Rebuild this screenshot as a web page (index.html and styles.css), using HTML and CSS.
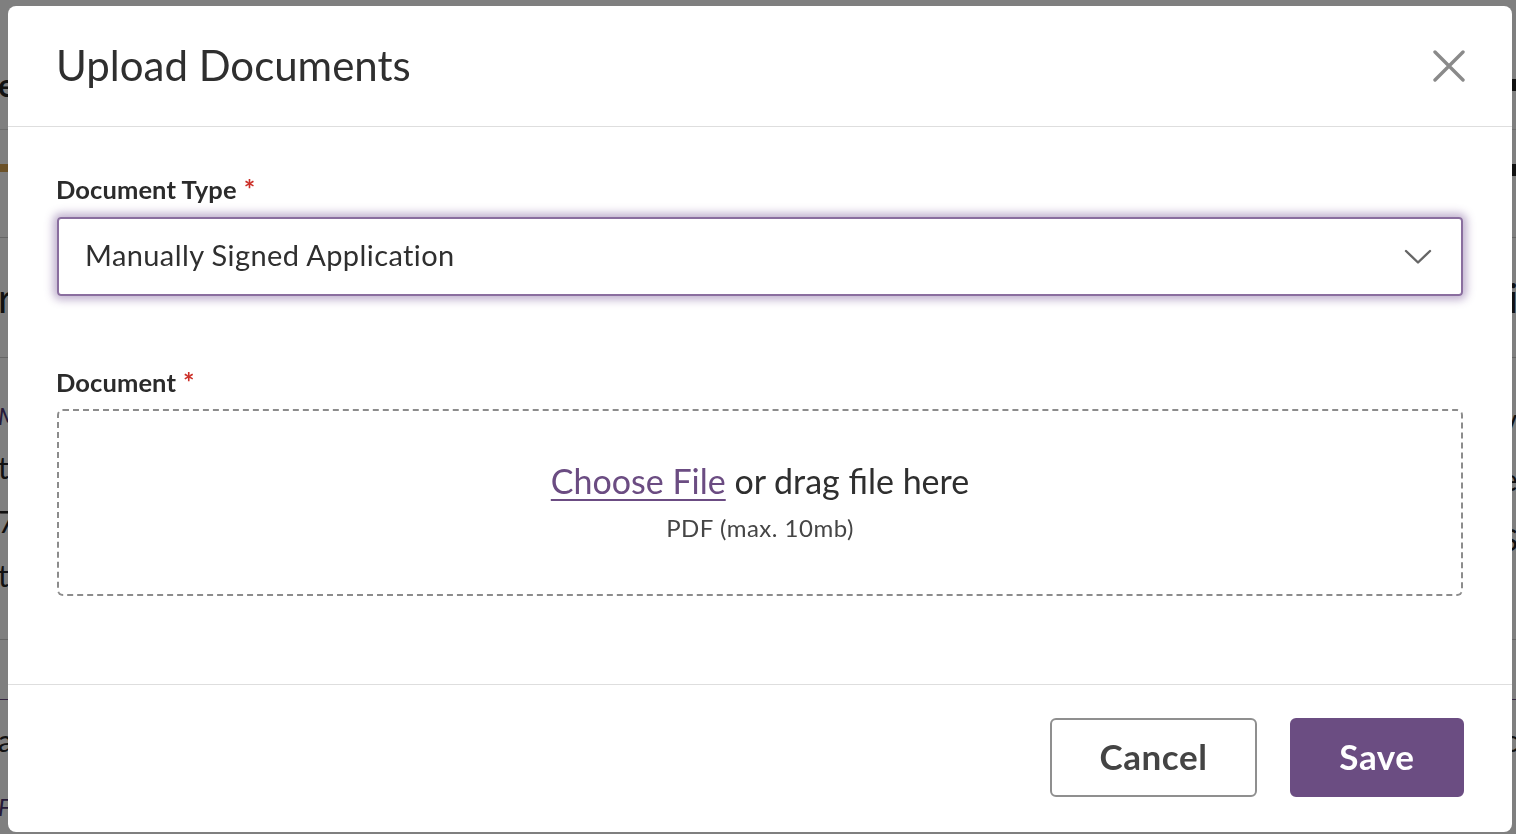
FILE: index.html
```html
<!DOCTYPE html>
<html lang="en">
<head>
<meta charset="utf-8">
<title>Upload Documents</title>
<link rel="stylesheet" href="styles.css">
</head>
<body>
<div class="page">
  <div class="prow prow-top"><span class="pl pl-head">ev</span><span class="pr pr-block"></span></div>
  <div class="prow prow-bar"><span class="pl-bar"></span><span class="pr pr-block"></span></div>
  <div class="prow prow-big"><span class="pl pl-big">r</span><span class="pr pr-big">i</span></div>
  <div class="prow prow-list">
    <div class="plist-left">
      <span class="pl pl-purple">M</span>
      <span class="pl">t</span>
      <span class="pl">7</span>
      <span class="pl">t</span>
    </div>
    <div class="plist-right">
      <span class="pr">v</span>
      <span class="pr">e</span>
      <span class="pr">S</span>
    </div>
  </div>
  <div class="prow prow-gap"></div>
  <div class="prow prow-last"><span class="pl">a</span><span class="pr">c</span></div>
  <div class="prow prow-foot"><span class="pl pl-purple">F</span></div>
</div>

<div class="backdrop">
  <div class="modal" role="dialog" aria-labelledby="modal-title">
    <header class="modal-header">
      <h1 id="modal-title" class="modal-title">Upload Documents</h1>
      <button class="close-btn" aria-label="Close">
        <svg width="32" height="32" viewBox="0 0 32 32" aria-hidden="true">
          <path d="M2 2 L30 30 M30 2 L2 30" stroke="#8a8a8a" stroke-width="3.4" stroke-linecap="round" fill="none"/>
        </svg>
      </button>
    </header>

    <div class="modal-body">
      <div class="field">
        <label class="field-label">Document Type<span class="req">*</span></label>
        <div class="select">
          <span class="select-value">Manually Signed Application</span>
          <svg class="chevron" width="28" height="16" viewBox="0 0 28 16" aria-hidden="true">
            <path d="M2 2 L14 13.5 L26 2" stroke="#666" stroke-width="2.4" fill="none" stroke-linecap="round" stroke-linejoin="round"/>
          </svg>
        </div>
      </div>

      <div class="field field-doc">
        <label class="field-label">Document<span class="req">*</span></label>
        <div class="dropzone">
          <p class="drop-main"><a class="choose" href="#">Choose File</a> or drag file here</p>
          <p class="drop-sub">PDF (max. 10mb)</p>
        </div>
      </div>
    </div>

    <footer class="modal-footer">
      <button class="btn btn-cancel">Cancel</button>
      <button class="btn btn-save">Save</button>
    </footer>
  </div>
</div>
</body>
</html>
```

FILE: styles.css
```css
* { box-sizing: border-box; }

html, body {
  margin: 0;
  padding: 0;
  height: 100%;
}

body {
  font-family: Lato, "Open Sans", "Liberation Sans", sans-serif;
  background: #ffffff;
  overflow: hidden;
}

/* ---------- page behind the modal ---------- */
.page {
  display: flex;
  flex-direction: column;
  width: 1516px;
  color: #222;
}

.prow {
  display: flex;
  justify-content: space-between;
  align-items: center;
}

.prow-top { height: 130px; padding-top: 40px; border-bottom: 1px solid #ddd; }
.prow-bar { height: 108px; border-bottom: 1px solid #ccc; align-items: flex-start; padding-top: 34px; }
.prow-big { height: 120px; border-bottom: 1px solid #ccc; }
.prow-list { height: 282px; border-bottom: 1px solid #ccc; align-items: flex-start; padding-top: 46px; }
.prow-gap { height: 60px; border-bottom: 1px solid #6b4c82; }
.prow-last { height: 80px; }
.prow-foot { height: 54px; }

.pl, .pr { font-size: 30px; line-height: 1; }
.pl { margin-left: -2px; }
.pr { margin-right: -2px; }
.pl-head { font-size: 32px; font-weight: 700; }
.pl-big, .pr-big { font-size: 40px; }
.pl-purple { color: #4b3470; font-style: italic; font-size: 24px; }
.pl-bar { width: 40px; height: 8px; background: #d8a452; }
.pr-block { width: 30px; height: 12px; background: #222; }

.plist-left, .plist-right {
  display: flex;
  flex-direction: column;
  gap: 24px;
}
.plist-right { padding-top: 0; gap: 30px; }

/* ---------- backdrop + modal ---------- */
.backdrop {
  position: fixed;
  inset: 0;
  background: rgba(0, 0, 0, 0.5);
  padding: 6px 4px 2px 8px;
  display: flex;
}

.modal {
  flex: 1;
  background: #fff;
  border-radius: 8px;
  display: flex;
  flex-direction: column;
  overflow: hidden;
}

.modal-header {
  height: 121px;
  border-bottom: 1px solid #dedede;
  display: flex;
  align-items: center;
  justify-content: space-between;
  padding: 0 47px 0 48px;
}

.modal-title {
  margin: 0;
  font-size: 42px;
  font-weight: 400;
  color: #2f2f2f;
  line-height: 1.2;
  margin-top: -2px;
}

.close-btn {
  background: none;
  border: 0;
  padding: 0;
  width: 32px;
  height: 32px;
  cursor: pointer;
  display: flex;
}

.modal-body {
  flex: 1;
  padding: 47px 49px 0 48px;
  display: flex;
  flex-direction: column;
}

.field {
  display: flex;
  flex-direction: column;
}

.field-doc {
  margin-top: 71px;
}

.field-label {
  font-size: 25.5px;
  font-weight: 700;
  color: #2b2b2b;
  line-height: 1.2;
  margin-bottom: 12px;
  letter-spacing: 0.1px;
}

.req {
  color: #cc3029;
  margin-left: 7px;
  font-size: 27px;
  line-height: 1;
  vertical-align: 0;
}

.select {
  height: 79px;
  margin-left: 1px;
  border: 2px solid #8a6e9f;
  border-radius: 4px;
  box-shadow: 0 0 9px 4px rgba(120, 86, 150, 0.45);
  display: flex;
  align-items: center;
  justify-content: space-between;
  padding: 0 29px 0 26px;
}

.select-value {
  font-size: 29px;
  letter-spacing: 0.4px;
  color: #2f2f2f;
  margin-top: -4px;
}

.chevron {
  margin-top: 1px;
}

.dropzone {
  height: 187px;
  margin-left: 1px;
  border: 2px dashed #8c8c8c;
  border-radius: 6px;
  display: flex;
  flex-direction: column;
  align-items: center;
  justify-content: center;
  padding-bottom: 2px;
}

.drop-main {
  margin: 0;
  font-size: 34px;
  color: #2f2f2f;
  line-height: 1.2;
}

.choose {
  color: #6b4c82;
  text-decoration: underline;
  text-decoration-thickness: 2px;
  text-underline-offset: 5px;
}

.drop-sub {
  margin: 12px 0 0;
  font-size: 24px;
  letter-spacing: 0.5px;
  color: #454545;
  line-height: 1.2;
}

.modal-footer {
  border-top: 1px solid #dedede;
  display: flex;
  justify-content: flex-end;
  gap: 33px;
  padding: 33px 48px 35px 49px;
}

.btn {
  height: 79px;
  border-radius: 6px;
  font-family: Lato, "Open Sans", "Liberation Sans", sans-serif;
  font-size: 35px;
  font-weight: 700;
  letter-spacing: 0.6px;
  cursor: pointer;
  padding: 0 0 3px;
}

.btn-cancel {
  width: 207px;
  background: #fff;
  border: 2px solid #8f8f8f;
  color: #444;
}

.btn-save {
  width: 174px;
  background: #6b4d82;
  border: 2px solid #6b4d82;
  color: #fff;
}
```
